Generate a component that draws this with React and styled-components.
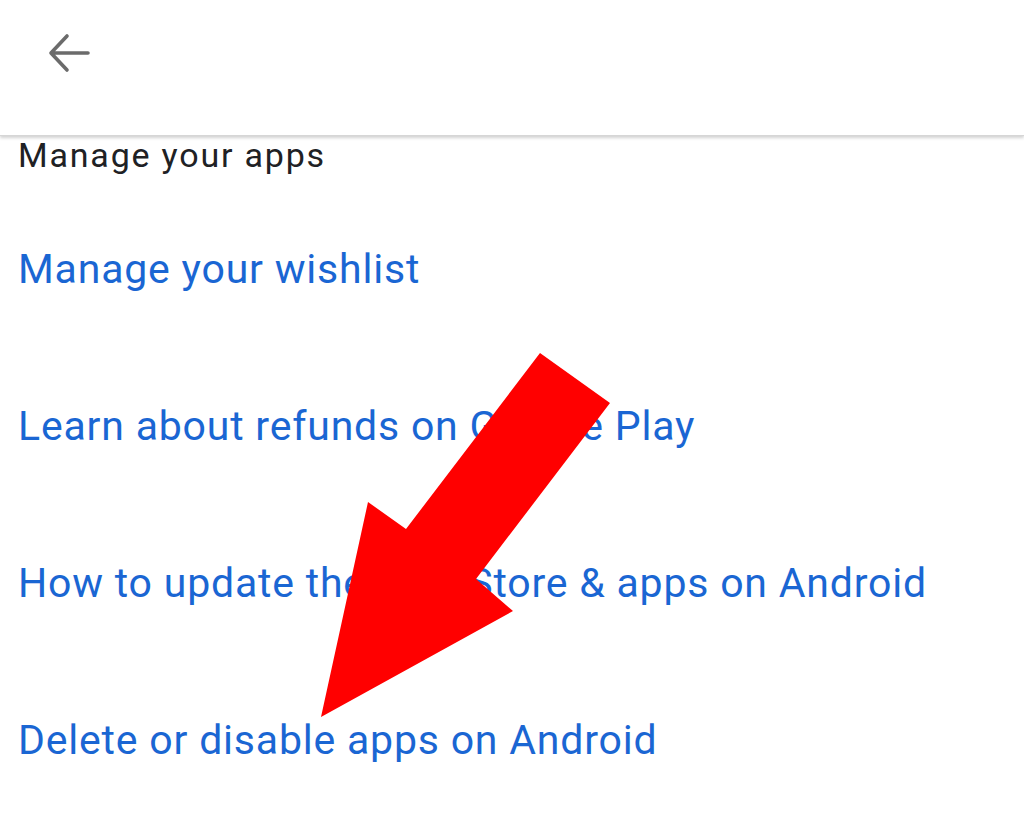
import styled, { createGlobalStyle } from 'styled-components';

const GlobalStyle = createGlobalStyle`
  html, body {
    margin: 0;
    padding: 0;
    background: #fff;
  }
  body {
    font-family: Roboto, "Noto Sans", sans-serif;
    width: 1024px;
    height: 813px;
    overflow: hidden;
  }
`;

const links = [
  'Manage your wishlist',
  'Learn about refunds on Google Play',
  'How to update the Play Store & apps on Android',
  'Delete or disable apps on Android',
];

const Screen = styled.div`
  position: relative;
  width: 1024px;
  height: 813px;
  background: #fff;
`;

const TopBar = styled.header`
  height: 136px;
  display: flex;
  align-items: flex-start;
  padding: 30px 0 0 46px;
  box-sizing: border-box;
  background: #fff;
  box-shadow: 0 2px 3px rgba(0, 0, 0, 0.18);
  border-bottom: 1px solid #d6d6d6;
  position: relative;
  z-index: 1;
`;

const BackButton = styled.button`
  border: 0;
  background: none;
  padding: 0;
  width: 46px;
  height: 46px;
  color: #6b6b6b;
  display: flex;
`;

const Content = styled.main`
  padding: 0 0 0 18px;
  display: flex;
  flex-direction: column;
`;

const SectionTitle = styled.h2`
  margin: 0;
  font-weight: 400;
  font-size: 34px;
  line-height: 38px;
  color: #202124;
  letter-spacing: 1.8px;
`;

const LinkList = styled.ul`
  list-style: none;
  margin: 0;
  padding: 0;
  display: flex;
  flex-direction: column;
  gap: 109px;
  margin-top: 71px;
`;

const HelpLink = styled.li`
  font-size: 41px;
  line-height: 48px;
  color: #1a66d3;
  letter-spacing: 0.8px;
  white-space: nowrap;
`;

const Pointer = styled.svg`
  position: absolute;
  left: 0;
  top: 0;
  pointer-events: none;
  z-index: 2;
`;

export default function App() {
  return (
    <Screen>
      <GlobalStyle />
      <TopBar>
        <BackButton aria-label="Back">
          <svg width="46" height="46" viewBox="0 0 46 46" fill="none">
            <path
              d="M42 23H6M21 6L5 23l16 17"
              stroke="currentColor"
              strokeWidth="3.6"
              strokeLinecap="round"
              strokeLinejoin="round"
            />
          </svg>
        </BackButton>
      </TopBar>
      <Content>
        <SectionTitle>Manage your apps</SectionTitle>
        <LinkList>
          {links.map((text) => (
            <HelpLink key={text}>{text}</HelpLink>
          ))}
        </LinkList>
      </Content>
      <Pointer width="1024" height="813" viewBox="0 0 1024 813">
        <polygon
          points="540,353 610,403 476,579 513,611 321,717 368,502 406,529"
          fill="#ff0000"
        />
      </Pointer>
    </Screen>
  );
}
